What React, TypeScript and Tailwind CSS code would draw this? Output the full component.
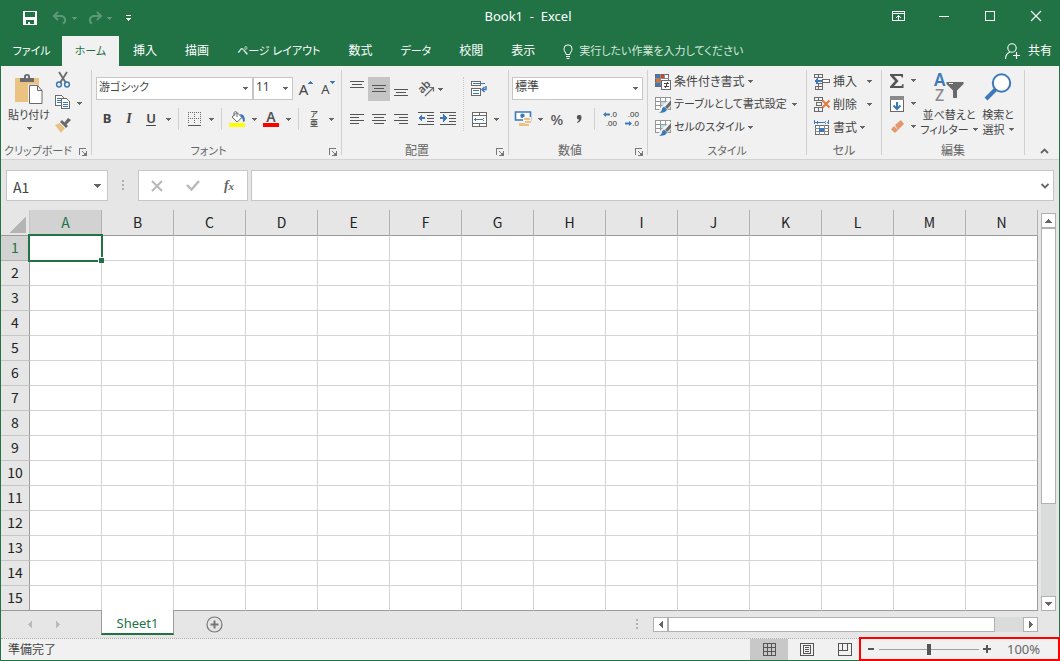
import React from "react";

const columns = ["A", "B", "C", "D", "E", "F", "G", "H", "I", "J", "K", "L", "M", "N"];
const rows = Array.from({ length: 15 }, (_, i) => i + 1);
const menuTabs = [
  { name: "挿入" },
  { name: "描画" },
  { name: "ページ レイアウト", kana: true },
  { name: "数式" },
  { name: "データ", kana: true },
  { name: "校閲" },
  { name: "表示" },
];

/* Shared pieces */

function Icon({ w = 16, h = 16, smooth = false, children }: { w?: number; h?: number; smooth?: boolean; children: React.ReactNode }) {
  return (
    <svg
      width={w}
      height={h}
      viewBox={`0 0 ${w} ${h}`}
      fill="none"
      aria-hidden="true"
      className="shrink-0 overflow-visible"
      shapeRendering={smooth ? "auto" : "crispEdges"}
    >
      {children}
    </svg>
  );
}

function Arrow({ color = "#666" }: { color?: string }) {
  return (
    <Icon w={5} h={3}>
      <path d="M0 0h5v1H0zM1 1h3v1H1zM2 2h1v1H2z" fill={color} />
    </Icon>
  );
}

function Tool({ label, active, children }: { label: string; active?: boolean; children: React.ReactNode }) {
  return (
    <button
      aria-label={label}
      className={
        active
          ? "flex h-6 w-[22px] items-center justify-center bg-[#c5c5c5]"
          : "flex h-6 w-[22px] items-center justify-center hover:bg-[#d5d5d5]"
      }
    >
      {children}
    </button>
  );
}

function Drop({ label }: { label: string }) {
  return (
    <button aria-label={label} className="flex h-6 w-3 items-center justify-center">
      <Arrow />
    </button>
  );
}

function Separator() {
  return <span className="mx-1 h-[22px] w-px bg-[#d0d0d0]" />;
}

function Combo({ label, value, className }: { label: string; value: string; className: string }) {
  return (
    <div className={`relative h-6 ${className}`}>
      <select
        aria-label={label}
        defaultValue={value}
        className="h-[23px] w-full appearance-none rounded-none border border-[#c6c6c6] bg-white pb-1 pl-0.5 leading-4 text-[#444]"
      >
        <option>{value}</option>
      </select>
      <span className="pointer-events-none absolute top-2.5 right-[5px]">
        <Arrow />
      </span>
    </div>
  );
}

function Group({ title, kana, launcher, className, children }: { title: string; kana?: boolean; launcher?: boolean; className: string; children: React.ReactNode }) {
  return (
    <>
      <section aria-label={title} className={`flex h-[93px] shrink-0 flex-col ${className}`}>
        <div className="flex-1">{children}</div>
        <div className="flex h-4 items-center">
          <span
            className={
              kana
                ? "flex-1 text-center text-[11px] leading-4 whitespace-nowrap text-[#666]"
                : "flex-1 text-center text-xs leading-4 text-[#666]"
            }
          >
            {title}
          </span>
          {launcher && (
            <button aria-label={`${title}の設定`} className="flex h-4 w-4 items-center justify-center pt-0.5">
              <Icon w={8} h={8}>
                <path d="M0 0h7v1H1v6H0zM3 3h1v1H3zM4 4h1v1H4zM5 5h1v1H5zM7 3h1v5H3V7h4z" fill="#777" />
                <path d="M5 6h2v1H5zM6 5h1v1H6z" fill="#777" />
              </Icon>
            </button>
          )}
        </div>
      </section>
      <span className="mt-1 h-[85px] w-px shrink-0 bg-[#d0d0d0]" />
    </>
  );
}

/* Title bar */

function TitleBar() {
  return (
    <div className="grid h-9 grid-cols-[1fr_auto_1fr] text-white">
      <div className="flex items-center pl-[17px]">
        <button aria-label="上書き保存" className="flex w-6 justify-center">
          <Icon w={14} h={14}>
            <path d="M0 0h14v14H0zM2 1v5h10V1zM3 9v4h2v-2h2v2h4V9z" fill="#fff" fillRule="evenodd" />
          </Icon>
        </button>
        <button aria-label="元に戻す" className="ml-2.5 flex w-5 items-center">
          <Icon w={16} h={14} smooth>
            <path d="M6 1L2 5l4 4M2 5h7.500a4 4 0 0 1 1.500 7.500" stroke="#5c9877" strokeWidth="2" />
          </Icon>
        </button>
        <Arrow color="#5c9877" />
        <button aria-label="やり直し" className="ml-2.5 flex w-5 items-center">
          <Icon w={16} h={14} smooth>
            <path d="M10 1l4 4-4 4M14 5H6.500A4 4 0 0 0 5 12.500" stroke="#5c9877" strokeWidth="2" />
          </Icon>
        </button>
        <Arrow color="#5c9877" />
        <button aria-label="クイック アクセス ツール バーのカスタマイズ" className="ml-3.5">
          <Icon w={5} h={6}>
            <path d="M0 0h5v1H0zM0 3h5v1H0zM1 4h3v1H1zM2 5h1v1H2z" fill="#fff" />
          </Icon>
        </button>
      </div>
      <h1 className="pr-1 text-[13px] leading-8 whitespace-pre">Book1  -  Excel</h1>
      <div className="flex h-8 justify-end">
        <button aria-label="リボンの表示オプション" className="flex w-[46px] items-center justify-center">
          <Icon w={13} h={10}>
            <path d="M0 0h13v10H0zM1 1v1h11V1zM1 3v6h11V3z" fill="#fff" fillRule="evenodd" />
            <path d="M6 4h1v5H6zM5 5h3v1H5zM4 6h1v1H4zM8 6h1v1H8z" fill="#fff" />
          </Icon>
        </button>
        <button aria-label="最小化" className="flex w-[46px] items-center justify-center">
          <Icon w={10} h={10}>
            <path d="M0 5h10v1H0z" fill="#fff" />
          </Icon>
        </button>
        <button aria-label="最大化" className="flex w-[46px] items-center justify-center">
          <Icon w={10} h={10}>
            <path d="M.5.5h9v9h-9z" stroke="#fff" />
          </Icon>
        </button>
        <button aria-label="閉じる" className="flex w-[46px] items-center justify-center">
          <Icon w={10} h={10} smooth>
            <path d="M0 0l10 10M10 0L0 10" stroke="#fff" strokeWidth="1.100" />
          </Icon>
        </button>
      </div>
    </div>
  );
}

function MenuTabs() {
  return (
    <nav className="flex h-[30px] items-stretch text-xs whitespace-nowrap text-white">
      <button className="w-[61px] text-center text-[11px]">ファイル</button>
      <button className="w-[57px] bg-[#f1f1f1] text-center text-[11px] text-[#217346]">ホーム</button>
      {menuTabs.map((tab) => (
        <button key={tab.name} className={tab.kana ? "px-3.5 text-[11px]" : "px-3.5"}>
          {tab.name}
        </button>
      ))}
      <button className="flex items-center gap-1.5 pl-3.5 text-[11px] text-[#d8e8df]">
        <Icon w={10} h={15} smooth>
          <path d="M3 10.500C3 8.500 1 7.500 1 4.800a4 4 0 0 1 8 0c0 2.700-2 3.700-2 5.700z" stroke="#fff" />
          <path d="M3 12.500h4M3.500 14.500h3" stroke="#fff" />
        </Icon>
        実行したい作業を入力してください
      </button>
      <button className="ml-auto flex items-center gap-2 pr-[7px]">
        <Icon w={15} h={16} smooth>
          <circle cx="7" cy="5" r="4.200" stroke="#fff" strokeWidth="1.100" />
          <path d="M.5 16c0-4 2-6 4.500-7" stroke="#fff" strokeWidth="1.100" />
          <path d="M8 12.500h7M11.500 9v7" stroke="#fff" strokeWidth="1.200" />
        </Icon>
        共有
      </button>
    </nav>
  );
}

/* Ribbon groups */

function ClipboardGroup() {
  return (
    <Group title="クリップボード" kana launcher className="w-[90px]">
      <div className="flex">
        <button className="flex w-[54px] flex-col items-center pt-2 pl-0.5 text-[11px] leading-4 text-[#444]">
          <Icon w={28} h={31} smooth>
            <path d="M0 4h24v24H0z" fill="#eac282" />
            <path d="M5 4h4V2.500Q9 0 12 0t3 2.500V4h4v4H5z" fill="#6a6a6a" />
            <circle cx="12" cy="3" r="1.200" fill="#f1f1f1" />
            <path d="M13 10.500h9l5.500 5.500v14.500H13z" fill="#f1f1f1" />
            <path d="M14.500 11.500h8l4.500 5v13H14.500zM22.500 11.500v5H27" fill="#fff" stroke="#6a6a6a" />
          </Icon>
          <span className="mt-0.5">貼り付け</span>
          <span className="mt-1">
            <Arrow />
          </span>
        </button>
        <div className="flex flex-col pt-[3px]">
          <button aria-label="切り取り" className="flex h-[22px] items-center">
            <Icon smooth>
              <path d="M4 0l7 11M12 0L5 11" stroke="#6a6a6a" strokeWidth="1.800" />
              <circle cx="4" cy="12.500" r="2.400" stroke="#3d79b6" strokeWidth="1.500" />
              <circle cx="12" cy="12.500" r="2.400" stroke="#3d79b6" strokeWidth="1.500" />
            </Icon>
          </button>
          <button aria-label="コピー" className="flex h-[22px] items-center gap-1.5 pt-0.5">
            <Icon>
              <path d="M.5.5h6l2 2v8h-8z" fill="#fff" stroke="#6a6a6a" />
              <path d="M2 3h4v1H2zM2 5h4v1H2zM2 7h4v1H2z" fill="#3d79b6" />
              <path d="M6.500 3.500h5l3 3v7h-8z" fill="#fff" stroke="#6a6a6a" />
              <path d="M8 7h5v1H8zM8 9h5v1H8zM8 11h5v1H8z" fill="#3d79b6" />
            </Icon>
            <Arrow />
          </button>
          <button aria-label="書式のコピー/貼り付け" className="flex h-[22px] items-center pt-0.5">
            <Icon smooth>
              <path d="M0 8l5-2 5 5-4 5z" fill="#eac282" />
              <path d="M5 5l2-2 6 6-2 2z" fill="#6a6a6a" />
              <path d="M9 6l4-5 3 2-5 5z" fill="#6a6a6a" />
              <path d="M5 6l5.500 5.500" stroke="#f1f1f1" />
            </Icon>
          </button>
        </div>
      </div>
    </Group>
  );
}

function FontGroup() {
  return (
    <Group title="フォント" kana launcher className="w-[249px]">
      <div className="flex flex-col gap-1.5 pt-[11px] pl-1 text-[#444]">
        <div className="flex">
          <Combo label="フォント名" value="游ゴシック" className="w-[157px] text-[11px]" />
          <Combo label="フォント サイズ" value="11" className="w-10 text-xs" />
          <span className="w-0.5" />
          <Tool label="フォント サイズの拡大">
            <span className="text-[15px] leading-6">A</span>
            <span className="self-start pt-1">
              <Icon w={5} h={3}>
                <path d="M2 0h1v1H2zM1 1h3v1H1zM0 2h5v1H0z" fill="#3d79b6" />
              </Icon>
            </span>
          </Tool>
          <Tool label="フォント サイズの縮小">
            <span className="text-[13px] leading-6">A</span>
            <span className="self-start pt-1">
              <Icon w={5} h={3}>
                <path d="M0 0h5v1H0zM1 1h3v1H1zM2 2h1v1H2z" fill="#3d79b6" />
              </Icon>
            </span>
          </Tool>
        </div>
        <div className="flex items-center">
          <Tool label="太字">
            <b className="text-[13px]">B</b>
          </Tool>
          <Tool label="斜体">
            <i className="font-['Liberation_Serif',serif] text-sm font-bold">I</i>
          </Tool>
          <Tool label="下線">
            <u className="text-[13px] font-semibold underline-offset-2">U</u>
          </Tool>
          <Drop label="下線の種類" />
          <Separator />
          <Tool label="罫線">
            <Icon w={13} h={14}>
              <path
                d="M.5 0v12M6.500 0v12M12.500 0v12M0 .5h13M0 6.500h13"
                stroke="#6a6a6a"
                strokeDasharray="1 1"
              />
              <path d="M0 13h13v1H0z" fill="#555" />
            </Icon>
          </Tool>
          <Drop label="罫線の種類" />
          <Separator />
          <Tool label="塗りつぶしの色">
            <Icon smooth>
              <path d="M3 6l5-4.500 5 5L8 11z" fill="#fff" stroke="#6a6a6a" />
              <path d="M5 5V1.500Q6.500-.5 8 1.500V6" stroke="#6a6a6a" />
              <path d="M11 3q5 0 5 7l-2 1q0-4-2-5z" fill="#3d79b6" />
              <path d="M0 12h16v4H0z" fill="#ff0" />
            </Icon>
          </Tool>
          <Drop label="塗りつぶしの色の一覧" />
          <Tool label="フォントの色">
            <Icon smooth>
              <text x="8" y="11" textAnchor="middle" fontSize="14" fontWeight="600" fill="#555">
                A
              </text>
              <path d="M0 12h16v4H0z" fill="#f00" />
            </Icon>
          </Tool>
          <Drop label="フォントの色の一覧" />
          <Separator />
          <Tool label="ふりがなの表示">
            <span className="flex flex-col font-['Liberation_Sans','Noto_Sans_CJK_JP',sans-serif] text-[8px] leading-[9px] font-medium">
              <span>ア</span>
              <span>亜</span>
            </span>
          </Tool>
          <Drop label="ふりがなの設定" />
        </div>
      </div>
    </Group>
  );
}

function AlignmentGroup() {
  return (
    <Group title="配置" launcher className="w-[166px]">
      <div className="flex pt-[11px] pl-1">
        <div className="flex w-[117px] flex-col gap-1.5">
          <div className="flex items-center">
            <Tool label="上揃え">
              <Icon w={14}>
                <path d="M0 0h14v1H0zM2 3h10v1H2zM0 6h14v1H0z" fill="#555" />
              </Icon>
            </Tool>
            <Tool label="上下中央揃え" active>
              <Icon w={14}>
                <path d="M0 4h14v1H0zM2 7h10v1H2zM0 10h14v1H0z" fill="#555" />
              </Icon>
            </Tool>
            <Tool label="下揃え">
              <Icon w={14}>
                <path d="M0 8h14v1H0zM2 11h10v1H2zM0 14h14v1H0z" fill="#555" />
              </Icon>
            </Tool>
            <button aria-label="方向" className="ml-1.5 flex h-6 items-center gap-1">
              <Icon smooth>
                <text x="1" y="10" fontSize="11" fontWeight="600" fill="#555" transform="rotate(-45 6 8)">
                  ab
                </text>
                <path d="M7 15l8-8M11.500 6.500H15.500V10.500" stroke="#6a6a6a" strokeWidth="1.200" />
              </Icon>
              <Arrow />
            </button>
          </div>
          <div className="flex items-center">
            <Tool label="左揃え">
              <Icon w={14} h={11}>
                <path d="M0 0h14v1H0zM0 3h9v1H0zM0 6h14v1H0zM0 9h9v1H0z" fill="#555" />
              </Icon>
            </Tool>
            <Tool label="中央揃え">
              <Icon w={14} h={11}>
                <path d="M0 0h14v1H0zM2 3h10v1H2zM0 6h14v1H0zM2 9h10v1H2z" fill="#555" />
              </Icon>
            </Tool>
            <Tool label="右揃え">
              <Icon w={14} h={11}>
                <path d="M0 0h14v1H0zM5 3h9v1H5zM0 6h14v1H0zM5 9h9v1H5z" fill="#555" />
              </Icon>
            </Tool>
            <span className="w-[3px]" />
            <Tool label="インデントを減らす">
              <Icon h={14}>
                <path d="M0 0h16v1H0zM9 3h7v1H9zM9 6h7v1H9zM9 9h7v1H9zM0 12h16v1H0z" fill="#555" />
                <path d="M0 6l4-4v3h3v2H4v3z" fill="#3d79b6" />
              </Icon>
            </Tool>
            <Tool label="インデントを増やす">
              <Icon h={14}>
                <path d="M0 0h16v1H0zM9 3h7v1H9zM9 6h7v1H9zM9 9h7v1H9zM0 12h16v1H0z" fill="#555" />
                <path d="M7 6L3 2v3H0v2h3v3z" fill="#3d79b6" />
              </Icon>
            </Tool>
          </div>
        </div>
        <span className="h-[54px] border-l border-dotted border-[#c8c8c8]" />
        <div className="flex flex-col gap-1.5 pl-1">
          <Tool label="折り返して全体を表示する">
            <Icon w={16} h={16}>
              <path d="M.5.5h9v4h-9zM.5 7.500h9v7h-9z" fill="#fff" stroke="#6a6a6a" />
              <path d="M2 2h12v1H2zM2 9h6v1H2zM2 12h6v1H2z" fill="#3d79b6" />
              <path d="M15 5v3.500h-4M13.500 6L11 8.500l2.500 2.500" stroke="#3d79b6" shapeRendering="auto" strokeWidth="1.500" />
            </Icon>
          </Tool>
          <div className="flex">
            <Tool label="セルを結合して中央揃え">
              <Icon w={15} h={15}>
                <path d="M.5.5h14v14H.5zM.5 3.500h14M.5 11.500h14M7.500.5v3M7.500 11.500v3" fill="#fff" stroke="#6a6a6a" />
                <path d="M2 7h11v1H2zM4 5v5L2 7.500zM11 5v5l2-2.500z" fill="#3d79b6" />
              </Icon>
            </Tool>
            <Drop label="セルの結合" />
          </div>
        </div>
      </div>
    </Group>
  );
}

function NumberGroup() {
  return (
    <Group title="数値" launcher className="w-[138px]">
      <div className="flex flex-col gap-1.5 pt-[11px] pl-[3px] text-[#555]">
        <Combo label="表示形式" value="標準" className="w-[131px] text-xs" />
        <div className="flex items-center">
          <Tool label="通貨表示形式">
            <Icon smooth>
              <path d="M.5 1h15v8H.5z" fill="#fff" stroke="#3d79b6" strokeWidth="1.600" />
              <circle cx="7.500" cy="4.800" r="2.200" fill="#3d79b6" />
              <path d="M8 6h8v10H8z" fill="#f1f1f1" />
              <path d="M9 7h6v2H9zM10 10h6v2h-6zM4 12h6v3H4zM9 13h5v2H9z" fill="#eac282" />
            </Icon>
          </Tool>
          <Drop label="通貨の種類" />
          <Tool label="パーセント スタイル">
            <span className="text-[15px] font-medium">%</span>
          </Tool>
          <Tool label="桁区切りスタイル">
            <svg width="6" height="8" viewBox="0 0 6 8" aria-hidden="true">
              <path d="M3 0a2.300 2.300 0 0 1 2.500 2.500Q5.500 6 1.500 8L1 7q2-1 2-2.500A2.200 2.200 0 0 1 3 0z" fill="#555" />
            </svg>
          </Tool>
          <Separator />
          <Tool label="小数点以下の表示桁数を増やす">
            <span className="relative flex flex-col items-end font-['Liberation_Sans',sans-serif] text-[8px] leading-[9px] text-[#333]">
              <span className="flex items-center">
                <Icon w={7} h={5} smooth>
                  <path d="M0 2.500L3 0v1.500h4v2H3V5z" fill="#3d79b6" />
                </Icon>
                .0
              </span>
              <span>.00</span>
            </span>
          </Tool>
          <Tool label="小数点以下の表示桁数を減らす">
            <span className="flex flex-col items-end font-['Liberation_Sans',sans-serif] text-[8px] leading-[9px] text-[#333]">
              <span>.00</span>
              <span className="flex items-center">
                <Icon w={7} h={5} smooth>
                  <path d="M7 2.500L4 0v1.500H0v2h4V5z" fill="#3d79b6" />
                </Icon>
                .0
              </span>
            </span>
          </Tool>
        </div>
      </div>
    </Group>
  );
}

function TableBrushIcon() {
  return (
    <Icon>
      <path d="M0 0h16v13H0z" fill="#fff" />
      <path d="M5 4h10v8H5z" fill="#bfe0e6" />
      <path d="M.5.5h15v12H.5zM0 4.500h15M0 8.500h15M5.500 0v13M10.500 0v13" stroke="#969696" />
      <path d="M16 2v7l-4 4 1 3H3l2-5 6-6z" fill="#f1f1f1" shapeRendering="auto" />
      <path d="M16 3v5l-4 4-2-2z" fill="#6a6a6a" shapeRendering="auto" />
      <path d="M9 9.500l3 3q-2 4-8 3 3-1 3-4z" fill="#3d79b6" shapeRendering="auto" />
    </Icon>
  );
}

function StyleGroup() {
  return (
    <Group title="スタイル" kana className="w-[158px]">
      <div className="flex flex-col pt-1 pl-[7px] text-[11px] whitespace-nowrap text-[#444]">
        <button className="flex h-[23px] items-center gap-[3px] text-xs">
          <Icon>
            <path d="M.5.5h13v12H.5z" fill="#fff" stroke="#6a6a6a" />
            <path d="M1 1h4v3H1z" fill="#3d79b6" />
            <path d="M5 1h5v3H5z" fill="#e03c20" />
            <path d="M1 5h4v3H1z" fill="#e06c30" />
            <path d="M1 9h4v3H1z" fill="#3d79b6" />
            <path d="M0 4.500h14M0 8.500h6M9.500 0v5M5.500 0v12" stroke="#8a8a8a" />
            <path d="M6.500 6.500h9v9h-9z" fill="#fff" stroke="#6a6a6a" />
            <path d="M9 9.500h5M9 12.500h5M13 8l-3 6" stroke="#444" />
          </Icon>
          条件付き書式
          <Arrow />
        </button>
        <button className="flex h-[23px] items-center gap-[3px]">
          <TableBrushIcon />
          <span className="pr-0.5">テーブルとして書式設定</span>
          <Arrow />
        </button>
        <button className="flex h-[23px] items-center gap-[3px]">
          <TableBrushIcon />
          セルのスタイル
          <Arrow />
        </button>
      </div>
    </Group>
  );
}

function CellsGroup() {
  return (
    <Group title="セル" className="w-[74px]">
      <div className="flex flex-col pt-1 pl-[7px] text-xs text-[#444]">
        <button className="flex h-[23px] items-center gap-[3px]">
          <Icon>
            <path d="M.5.5h8v3h-8zM4.500.5v3M1.500 12.500h7v3h-7zM4.500 9.500v6M1.500 9.500h7v3" stroke="#6a6a6a" />
            <path d="M8.500 5.500h7v3h-7z" fill="#fff" stroke="#6a6a6a" />
            <path d="M0 7l4-3v2h4v2H4v2z" fill="#3d79b6" />
          </Icon>
          <span className="w-[31px] text-left">挿入</span>
          <Arrow />
        </button>
        <button className="flex h-[23px] items-center gap-[3px]">
          <Icon>
            <path d="M.5.5h8v3h-8zM4.500.5v3M2.500 5.500h5v3h-5zM.5 10.500h8v4h-8zM4.500 10.500v4" stroke="#6a6a6a" />
            <path d="M8.500 3.500l7 7M15.500 3.500l-7 7" stroke="#e07b39" strokeWidth="2" shapeRendering="auto" />
          </Icon>
          <span className="w-[31px] text-left">削除</span>
          <Arrow />
        </button>
        <button className="flex h-[23px] items-center gap-[3px]">
          <Icon>
            <path d="M0 0h1v4H0zM14 0h1v4h-1zM1 2h13v1H1zM4 0v5L2 2.500zM11 0v5l2-2.500z" fill="#3d79b6" />
            <path d="M1.500 5.500h13v9h-13z" fill="#fff" stroke="#6a6a6a" />
            <path d="M1 8.500h14M1 11.500h14M5.500 5v10M10.500 5v10" stroke="#8a8a8a" />
            <path d="M5 8h5v4H5z" fill="#3d79b6" />
          </Icon>
          <span>書式</span>
          <Arrow />
        </button>
      </div>
    </Group>
  );
}

function EditingGroup() {
  return (
    <Group title="編集" className="w-[142px]">
      <div className="flex text-[11px] leading-[15px] whitespace-nowrap text-[#444]">
        <div className="flex w-9 flex-col pt-[3px] pl-[7px]">
          <button aria-label="合計" className="flex h-[23px] items-center gap-1.5">
            <Icon smooth>
              <path d="M1 1h13v3.500h-1.200L12 3H5l4.500 5L5 13h7.500l1-2h1v4H1v-1.500L6 8 1 2.500z" fill="#555" />
            </Icon>
            <Arrow />
          </button>
          <button aria-label="フィル" className="flex h-[23px] items-center gap-1.5">
            <Icon>
              <path d="M1.500.5h13v15h-13z" fill="#fff" stroke="#6a6a6a" />
              <path d="M1 0h14v4H1z" fill="#8a8a8a" />
              <path d="M8 6v7M4.500 9.500L8 13l3.500-3.500" stroke="#3d79b6" strokeWidth="2" shapeRendering="auto" />
            </Icon>
            <Arrow />
          </button>
          <button aria-label="クリア" className="flex h-[23px] items-center gap-1.5">
            <Icon smooth>
              <path d="M6 6l6-5 3 4-6 6z" fill="#e29a6c" />
              <path d="M5 7l4 4-3 3-4-3.500z" fill="#e29a6c" />
            </Icon>
            <Arrow />
          </button>
        </div>
        <button className="flex w-[62px] flex-col items-center pt-[7px]">
          <Icon w={30} h={34} smooth>
            <text x="0" y="13" fontSize="17" fontWeight="600" fill="#3d79b6">A</text>
            <text x="1" y="28" fontSize="16" fontWeight="500" fill="#8a8a8a">Z</text>
            <path d="M12.500 9h17v2L23 17.500V25h-4v-7.500L12.500 11z" fill="#6a6a6a" />
            <path d="M15 10.500h4" stroke="#f1f1f1" />
          </Icon>
          <span>並べ替えと</span>
          <span className="flex items-center gap-1">
            フィルター
            <Arrow />
          </span>
        </button>
        <button className="flex w-9 flex-col items-center pt-[7px]">
          <Icon w={28} h={34} smooth>
            <circle cx="17.500" cy="10" r="8.700" fill="#fff" stroke="#3d79b6" strokeWidth="2" />
            <path d="M11.500 16.500L2 26" stroke="#3d79b6" strokeWidth="4" />
          </Icon>
          <span>検索と</span>
          <span className="flex items-center gap-1">
            選択
            <Arrow />
          </span>
        </button>
      </div>
    </Group>
  );
}

function Ribbon() {
  return (
    <div className="flex border-b border-[#d2d2d2] bg-[#f1f1f1]">
      <ClipboardGroup />
      <FontGroup />
      <AlignmentGroup />
      <NumberGroup />
      <StyleGroup />
      <CellsGroup />
      <EditingGroup />
      <div className="flex flex-1 items-end justify-end">
        <button aria-label="リボンを折りたたむ" className="flex h-4 w-[29px] items-center justify-center">
          <Icon w={9} h={6} smooth>
            <path d="M1 5l3.500-3.500L8 5" stroke="#666" strokeWidth="1.800" />
          </Icon>
        </button>
      </div>
    </div>
  );
}

/* Formula bar */

function Dots() {
  return (
    <Icon w={2} h={11}>
      <path d="M0 0h2v2H0zM0 4h2v2H0zM0 8h2v2H0z" fill="#b0b0b0" />
    </Icon>
  );
}

function FormulaBar() {
  return (
    <div className="flex h-[50px] pt-2.5 pr-[5px] pl-[5px]">
      <div className="flex h-[31px] w-[102px] items-center border border-[#c6c6c6] bg-white">
        <input
          aria-label="名前ボックス"
          defaultValue="A1"
          className="min-w-0 flex-1 pt-0.5 pl-1.5 font-['Noto_Sans_CJK_JP',sans-serif] text-sm leading-5 text-[#444] outline-none"
        />
        <button aria-label="名前の一覧" className="pr-1.5">
          <Icon w={7} h={4}>
            <path d="M0 0h7v1H0zM1 1h5v1H1zM2 2h3v1H2zM3 3h1v1H3z" fill="#666" />
          </Icon>
        </button>
      </div>
      <div className="flex h-[31px] w-[30px] items-center justify-center">
        <Dots />
      </div>
      <div className="flex h-[31px] w-[110px] items-center border border-[#c6c6c6] bg-white">
        <button aria-label="キャンセル" className="flex w-9 justify-center">
          <Icon w={12} h={10} smooth>
            <path d="M1 0l10 10M11 0L1 10" stroke="#b8b8b8" strokeWidth="2" />
          </Icon>
        </button>
        <button aria-label="入力" className="flex w-9 justify-center">
          <Icon w={14} h={11} smooth>
            <path d="M1 5l4.500 4.500L13 1" stroke="#b8b8b8" strokeWidth="2.400" />
          </Icon>
        </button>
        <button
          aria-label="関数の挿入"
          className="flex w-9 items-baseline justify-center font-['Liberation_Serif',serif] leading-4 font-bold text-[#666] italic"
        >
          <span className="text-sm leading-4">f</span>
          <span className="text-[11px] leading-4">x</span>
        </button>
      </div>
      <div className="ml-[3px] flex h-[31px] flex-1 items-center border border-[#c6c6c6] bg-white">
        <input aria-label="数式バー" className="min-w-0 flex-1 px-2 text-sm outline-none" />
        <button aria-label="数式バーの展開" className="pr-1">
          <Icon w={8} h={6} smooth>
            <path d="M.5 1L4 4.500 7.500 1" stroke="#666" strokeWidth="1.800" />
          </Icon>
        </button>
      </div>
    </div>
  );
}

/* Sheet */

function SheetGrid() {
  return (
    <table className="w-full table-fixed border-separate border-spacing-0 font-['Noto_Sans_CJK_JP',sans-serif] text-sm leading-5 text-[#222]">
      <thead>
        <tr className="h-[26px]">
          <td className="w-[29px] border-r border-b border-r-[#c6c6c6] border-b-[#9b9b9b] p-0">
            <div className="flex justify-end pt-1 pr-[3px]">
              <Icon w={17} h={17}>
                <path d="M17 0v17H0z" fill="#b4b4b4" />
              </Icon>
            </div>
          </td>
          {columns.map((col) => (
            <th
              key={col}
              scope="col"
              className={
                col === "A"
                  ? "border-r border-b border-r-[#b1b1b1] border-b-[#217346] bg-[#d2d2d2] p-0 pb-0.5 font-normal text-[#217346]"
                  : "border-r border-b border-r-[#b1b1b1] border-b-[#9b9b9b] p-0 pb-0.5 font-normal"
              }
            >
              {col}
            </th>
          ))}
        </tr>
      </thead>
      <tbody>
        {rows.map((row) => (
          <tr key={row} className="h-[25px]">
            <th
              scope="row"
              className={
                row === 1
                  ? "border-r border-b border-[#b1b1b1] bg-[#d2d2d2] p-0 pb-0.5 font-normal text-[#217346]"
                  : row === 15
                    ? "border-r border-b border-[#9b9b9b] p-0 pb-0.5 font-normal"
                    : "border-r border-b border-r-[#9b9b9b] border-b-[#c6c6c6] p-0 pb-0.5 font-normal"
              }
            >
              {row}
            </th>
            {columns.map((col) => (
              <td
                key={col}
                className={
                  row === 15
                    ? "relative border-r border-b border-r-[#d4d4d4] border-b-[#9b9b9b] bg-white p-0 last:border-r-[#9b9b9b]"
                    : "relative border-r border-b border-[#d4d4d4] bg-white p-0 last:border-r-[#9b9b9b]"
                }
              >
                {row === 1 && col === "A" && (
                  <div className="absolute -inset-0.5 z-10 border-2 border-[#217346]">
                    <span className="absolute -right-[3px] -bottom-[3px] h-1.5 w-1.5 border-t border-l border-white bg-[#217346]" />
                  </div>
                )}
              </td>
            ))}
          </tr>
        ))}
      </tbody>
    </table>
  );
}

function VerticalScroll() {
  return (
    <div className="flex w-[21px] shrink-0 flex-col pt-[3px] pr-[3px] pl-[3px]">
      <button aria-label="上へ" className="flex h-[15px] items-center justify-center border border-[#b1b1b1] bg-white">
        <Icon w={7} h={4}>
          <path d="M3 0h1v1H3zM2 1h3v1H2zM1 2h5v1H1zM0 3h7v1H0z" fill="#666" />
        </Icon>
      </button>
      <div className="flex-1 bg-[#dadcdb]">
        <div className="h-3/4 border border-[#b1b1b1] bg-white" />
      </div>
      <button aria-label="下へ" className="flex h-[15px] items-center justify-center border border-[#b1b1b1] bg-white">
        <Icon w={7} h={4}>
          <path d="M0 0h7v1H0zM1 1h5v1H1zM2 2h3v1H2zM3 3h1v1H3z" fill="#666" />
        </Icon>
      </button>
    </div>
  );
}

function SheetTabs() {
  return (
    <div className="flex h-[27px]">
      <div className="flex w-[100px] items-center gap-6 pl-[27px]">
        <button aria-label="前のシート">
          <Icon w={4} h={7}>
            <path d="M4 0v7L0 3.500z" fill="#bbb" />
          </Icon>
        </button>
        <button aria-label="次のシート">
          <Icon w={4} h={7}>
            <path d="M0 0v7l4-3.500z" fill="#bbb" />
          </Icon>
        </button>
      </div>
      <button className="relative -mt-px h-[25px] w-[73px] border-x border-b-2 border-x-[#9b9b9b] border-b-[#217346] bg-white pt-[3px] text-[13px] leading-5 text-[#217346]">
        Sheet1
      </button>
      <button aria-label="新しいシート" className="ml-8">
        <Icon w={17} h={17} smooth>
          <circle cx="8.500" cy="8.500" r="7.500" stroke="#777" strokeWidth="1.200" />
          <path d="M4.500 8.500h8M8.500 4.500v8" stroke="#777" strokeWidth="2" />
        </Icon>
      </button>
      <div className="ml-auto flex w-[423px] items-center pr-[21px]">
        <Dots />
        <div className="ml-[15px] flex h-[15px] flex-1">
          <button aria-label="左へ" className="flex w-[15px] items-center justify-center border border-[#b1b1b1] bg-white">
            <Icon w={4} h={7}>
              <path d="M3 0h1v7H3zM2 1h1v5H2zM1 2h1v3H1zM0 3h1v1H0z" fill="#666" />
            </Icon>
          </button>
          <div className="flex-1 bg-[#dadcdb]">
            <div className="h-full w-[92%] border border-[#b1b1b1] bg-white" />
          </div>
          <button aria-label="右へ" className="flex w-[15px] items-center justify-center border border-[#b1b1b1] bg-white">
            <Icon w={4} h={7}>
              <path d="M0 0h1v7H0zM1 1h1v5H1zM2 2h1v3H2zM3 3h1v1H3z" fill="#666" />
            </Icon>
          </button>
        </div>
      </div>
    </div>
  );
}

function StatusBar() {
  return (
    <footer className="flex h-[22px] items-stretch border-t border-dotted border-[#aaa] bg-[#f1f1f1] text-[#444]">
      <span className="flex-1 pl-[7px] text-xs leading-[22px]">準備完了</span>
      <button aria-label="標準" className="flex w-[38px] items-center justify-center bg-[#c8c8c8]">
        <Icon w={13} h={13}>
          <path d="M.5.5h12v12H.5zM0 4.500h13M0 8.500h13M4.500 0v13M8.500 0v13" stroke="#555" />
        </Icon>
      </button>
      <button aria-label="ページ レイアウト" className="flex w-[38px] items-center justify-center">
        <Icon w={14} h={13}>
          <path d="M.5.5h13v12H.5zM3.500 2.500h7v8h-7zM5 4.500h4M5 6.500h4M5 8.500h4" stroke="#555" />
        </Icon>
      </button>
      <button aria-label="改ページ プレビュー" className="flex w-[38px] items-center justify-center">
        <Icon w={14} h={13}>
          <path d="M.5.5h13v12H.5zM4.500 0v7.500M9.500 0v7.500M0 7.500h10" stroke="#555" />
        </Icon>
      </button>
      <div className="relative -ml-[5px] flex w-[200px] items-center pb-px pl-1">
        <button aria-label="縮小" className="flex w-4 justify-center">
          <Icon w={6} h={2}>
            <path d="M0 0h6v2H0z" fill="#555" />
          </Icon>
        </button>
        <input
          type="range"
          aria-label="ズーム"
          min={0}
          max={100}
          defaultValue={50}
          className="h-3 w-[100px] appearance-none bg-transparent [&::-webkit-slider-runnable-track]:h-px [&::-webkit-slider-runnable-track]:bg-[#a0a0a0] [&::-webkit-slider-thumb]:-mt-[5px] [&::-webkit-slider-thumb]:h-[11px] [&::-webkit-slider-thumb]:w-1 [&::-webkit-slider-thumb]:appearance-none [&::-webkit-slider-thumb]:bg-[#555]"
        />
        <button aria-label="拡大" className="flex w-4 justify-center">
          <Icon w={8} h={8}>
            <path d="M0 3h8v2H0zM3 0h2v8H3z" fill="#555" />
          </Icon>
        </button>
        <span className="ml-3 text-[13px] leading-[18px] text-[#666]">100%</span>
        <span className="pointer-events-none absolute -top-0.5 -right-px -bottom-px left-0 border-2 border-[#f00]" />
      </div>
    </footer>
  );
}

export default function App() {
  return (
    <div className="flex min-h-screen flex-col border-x border-b border-[#217346] bg-[#e6e6e6] font-['Noto_Sans','Noto_Sans_CJK_JP',sans-serif] [font-feature-settings:'palt'] select-none">
      <header className="bg-[#217346]">
        <TitleBar />
        <MenuTabs />
      </header>
      <Ribbon />
      <FormulaBar />
      <main className="flex">
        <SheetGrid />
        <VerticalScroll />
      </main>
      <SheetTabs />
      <StatusBar />
    </div>
  );
}
